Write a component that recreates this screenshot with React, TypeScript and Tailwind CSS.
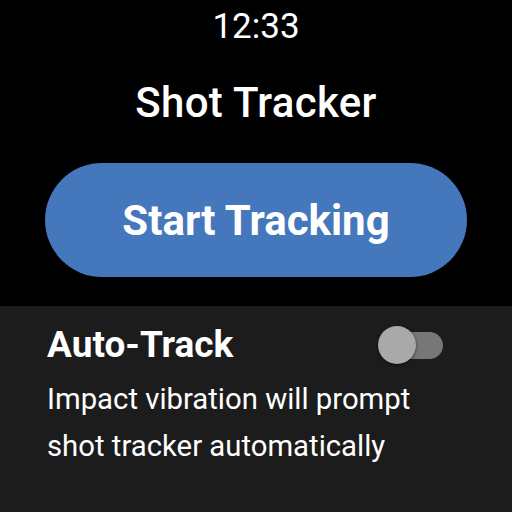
import React from "react";

export default function App() {
  return (
    <div className="w-[512px] h-[512px] bg-black flex flex-col overflow-hidden" style={{ fontFamily: "Roboto, 'Noto Sans', sans-serif" }}>
      <div className="h-[306px] flex flex-col items-center">
        <div className="mt-[5px] h-[44px] leading-[44px] text-[35px] text-white">12:33</div>
        <div className="mt-[29px] h-[50px] leading-[50px] text-[42px] font-medium text-white tracking-[0.3px]">Shot Tracker</div>
        <button className="mt-[35px] w-[422px] h-[114px] rounded-full bg-[#4477bb] text-white text-[42px] font-bold">
          Start Tracking
        </button>
      </div>
      <div className="flex-1 bg-[#1c1c1c] pl-[47px] pr-[47px] pt-[17px]">
        <div className="flex items-center justify-between h-[44px]">
          <div className="text-[37px] font-bold text-white leading-[44px]">Auto-Track</div>
          <div className="relative w-[65px] h-[38px] mr-[22px] flex items-center">
            <div className="absolute left-[10px] right-0 h-[27px] rounded-full bg-[#777777]"></div>
            <div className="absolute left-0 w-[38px] h-[38px] rounded-full bg-[#a9a9a9] shadow-[0_1px_3px_rgba(0,0,0,0.6)]"></div>
          </div>
        </div>
        <div className="mt-[9px] text-[29.3px] leading-[47px] text-white">
          Impact vibration will prompt
          <br />
          shot tracker automatically
        </div>
      </div>
    </div>
  );
}
